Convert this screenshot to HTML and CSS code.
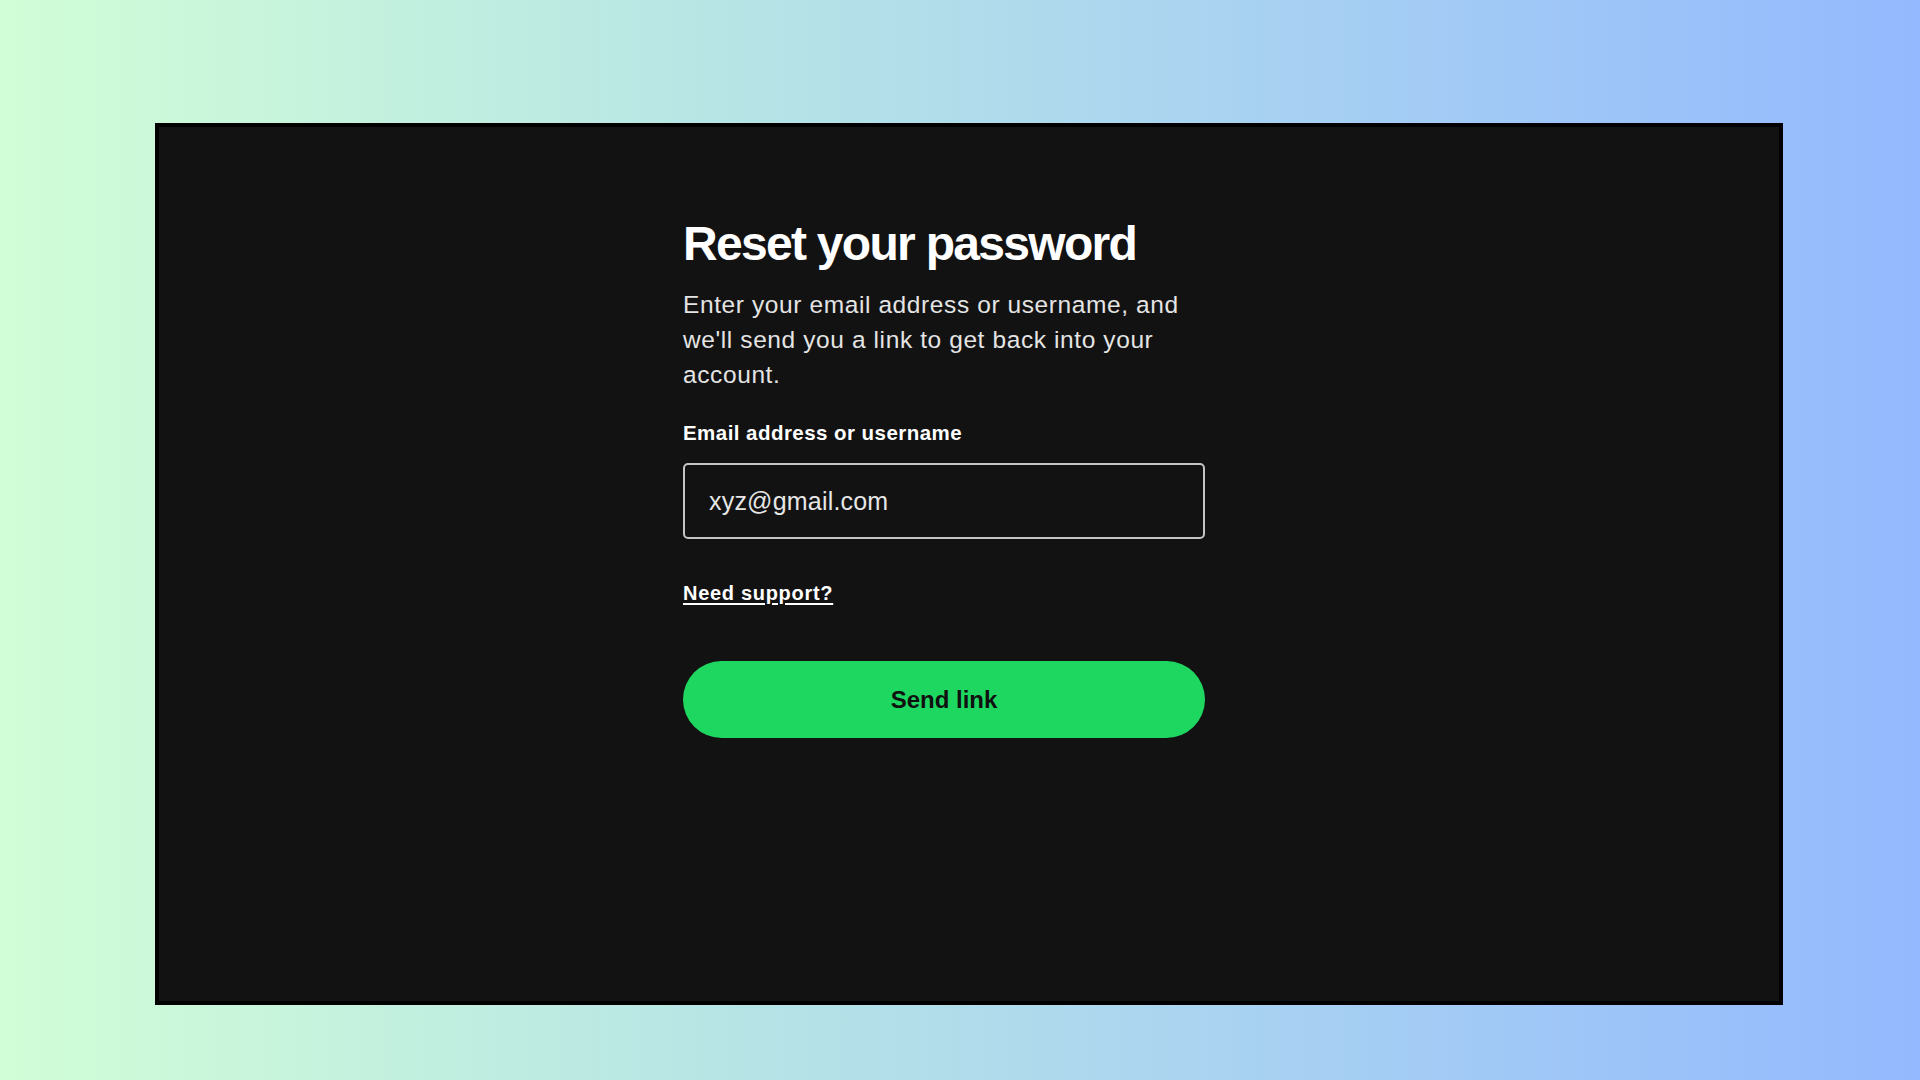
FILE: index.html
```html
<!DOCTYPE html>
<html lang="en">
<head>
  <meta charset="UTF-8" />
  <meta name="viewport" content="width=device-width, initial-scale=1.0"/>
  <title>Reset your password</title>
  <link rel="stylesheet" href="styles.css">
</head>
<body>
  <div class="frame">
    <form class="reset-form" onsubmit="return false;">
      <h1>Reset your password</h1>
      <p class="intro">Enter your email address or username, and we'll send you a link to get back into your account.</p>

      <label for="email" class="field-label">Email address or username</label>
      <input type="text" id="email" class="field-input" value="xyz@gmail.com">

      <a href="#" class="support-link">Need support?</a>

      <button type="submit" class="send-btn">Send link</button>
    </form>
  </div>
</body>
</html>
```

FILE: styles.css
```css
:root {
  --panel: #121212;
  --text: #ffffff;
  --muted: #e4e4e4;
  --green: #1ed760;
}

body {
  margin: 0;
  height: 1080px;
  overflow: hidden;
  font-family: "Liberation Sans", Arial, sans-serif;
  background: linear-gradient(to right, #d1fed6 0%, #b5e3e6 40%, #aad4f0 62%, #94b9fe 100%);
}

.frame {
  box-sizing: border-box;
  width: 1628px;
  height: 882px;
  margin: 123px 0 0 155px;
  border: 4px solid #000;
  background: var(--panel);
  padding: 89px 0 0 524px;
}

.reset-form {
  display: flex;
  flex-direction: column;
  width: 522px;
}

h1 {
  margin: 0;
  font-size: 48px;
  line-height: 56px;
  font-weight: bold;
  letter-spacing: -1.7px;
  color: var(--text);
}

.intro {
  margin: 15px 0 0;
  font-size: 24.5px;
  line-height: 35px;
  letter-spacing: 0.6px;
  color: var(--muted);
}

.field-label {
  margin-top: 29px;
  font-size: 20.5px;
  line-height: 24px;
  font-weight: bold;
  letter-spacing: 0.45px;
  color: var(--text);
}

.field-input {
  box-sizing: border-box;
  margin-top: 18px;
  height: 76px;
  padding: 0 24px;
  border: 2px solid #c4c4c4;
  border-radius: 5px;
  background: transparent;
  font-family: inherit;
  font-size: 25px;
  letter-spacing: 0.2px;
  color: #e6e6e6;
  outline: none;
}

.support-link {
  align-self: flex-start;
  margin-top: 42px;
  font-size: 20px;
  line-height: 24px;
  font-weight: bold;
  letter-spacing: 0.7px;
  color: var(--text);
  text-decoration: underline;
  text-underline-offset: 3px;
}

.send-btn {
  margin-top: 56px;
  height: 77px;
  border: none;
  border-radius: 40px;
  background: var(--green);
  font-family: inherit;
  font-size: 24px;
  font-weight: bold;
  color: #101010;
  cursor: pointer;
}
```
